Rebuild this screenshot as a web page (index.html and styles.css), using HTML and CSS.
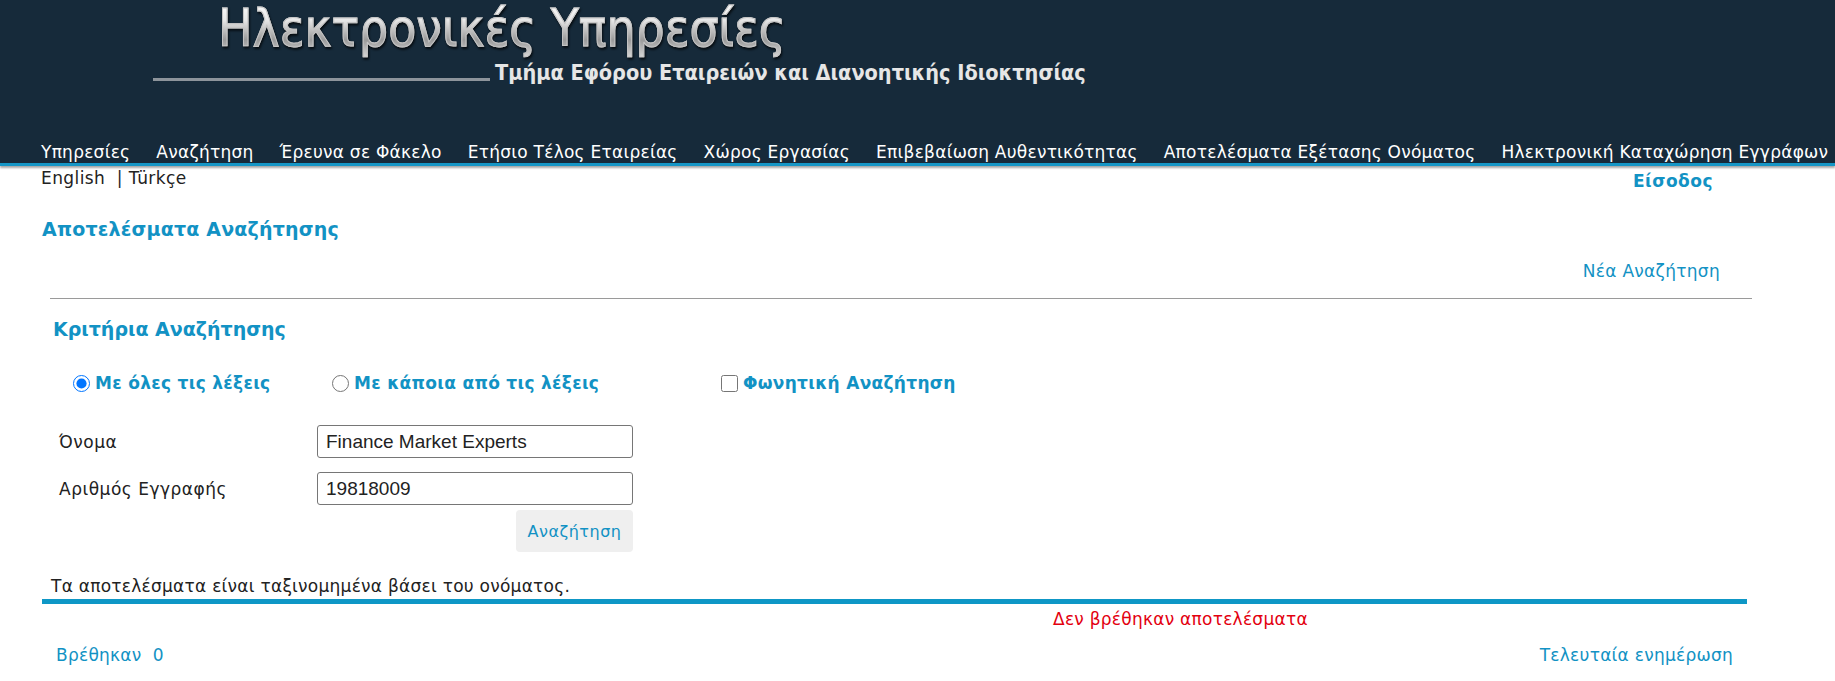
FILE: index.html
```html
<!DOCTYPE html>
<html lang="el">
<head>
    <meta charset="UTF-8">
    <meta name="viewport" content="width=device-width, initial-scale=1.0">
    <title>Αποτελέσματα Αναζήτησης</title>
    <link rel="stylesheet" href="styles.css">
</head>
<body>

    <header class="site-header">
        <div class="brand">
            <div class="brand-title">Ηλεκτρονικές Υπηρεσίες</div>
            <div class="brand-sub">
                <span class="brand-rule"></span>
                <span class="brand-dept">Τμήμα Εφόρου Εταιρειών και Διανοητικής Ιδιοκτησίας</span>
            </div>
        </div>
        <nav class="main-nav">
            <a href="#">Υπηρεσίες</a>
            <a href="#">Αναζήτηση</a>
            <a href="#">Έρευνα σε Φάκελο</a>
            <a href="#">Ετήσιο Τέλος Εταιρείας</a>
            <a href="#">Χώρος Εργασίας</a>
            <a href="#">Επιβεβαίωση Αυθεντικότητας</a>
            <a href="#">Αποτελέσματα Εξέτασης Ονόματος</a>
            <a href="#">Ηλεκτρονική Καταχώρηση Εγγράφων</a>
        </nav>
    </header>

    <div class="lang-bar">
        <div class="langs"><a href="#">English</a>&nbsp;&nbsp;| <a href="#">Türkçe</a></div>
        <a class="login" href="#">Είσοδος</a>
    </div>

    <main class="content">
        <h2 class="page-title">Αποτελέσματα Αναζήτησης</h2>
        <div class="new-search"><a href="#">Νέα Αναζήτηση</a></div>
        <hr class="divider">

        <form class="criteria" action="#" method="get">
            <h3 class="criteria-title">Κριτήρια Αναζήτησης</h3>

            <div class="options">
                <label class="opt opt-all"><input type="radio" name="mode" checked> Με όλες τις λέξεις</label>
                <label class="opt opt-some"><input type="radio" name="mode"> Με κάποια από τις λέξεις</label>
                <label class="opt"><input type="checkbox" name="phonetic"> Φωνητική Αναζήτηση</label>
            </div>

            <div class="fields">
                <label for="iname">Όνομα</label>
                <input type="text" id="iname" name="name" value="Finance Market Experts">

                <label for="inum">Αριθμός Εγγραφής</label>
                <input type="text" id="inum" name="number" value="19818009">

                <button type="submit" class="btn-search">Αναζήτηση</button>
            </div>
        </form>

        <p class="sort-note">Τα αποτελέσματα είναι ταξινομημένα βάσει του ονόματος.</p>
        <div class="results-bar"></div>
        <p class="no-results">Δεν βρέθηκαν αποτελέσματα</p>

        <div class="results-footer">
            <span>Βρέθηκαν&nbsp;&nbsp;0</span>
            <span>Τελευταία ενημέρωση</span>
        </div>
    </main>

</body>
</html>
```

FILE: styles.css
```css
/* Estilo geral */
body {
    margin: 0;
    font-family: "DejaVu Sans", Verdana, sans-serif;
    font-size: 17px;
    letter-spacing: 0.25px;
    color: #222;
    background: #fff;
}

a {
    text-decoration: none;
}

/* Cabeçalho escuro */
.site-header {
    background: #162a3a;
    box-shadow: 0 2px 2px rgba(0, 0, 0, 0.35);
}

.brand {
    height: 142px;
    letter-spacing: 0;
}

.brand-title {
    display: inline-block;
    margin-left: 218px;
    padding-top: 1px;
    font-family: "DejaVu Sans Condensed", "DejaVu Sans", sans-serif;
    font-size: 51px;
    line-height: 56px;
    background: linear-gradient(#ffffff 0%, #e8e8e8 35%, #9a9a9a 70%, #d6d6d6 100%);
    -webkit-background-clip: text;
    background-clip: text;
    color: transparent;
    -webkit-text-stroke: 1px #c4c4c4;
    filter: drop-shadow(1px 2px 1px rgba(0, 0, 0, 0.7));
}

.brand-sub {
    display: flex;
    align-items: flex-end;
    margin-top: 3px;
}

.brand-rule {
    width: 337px;
    height: 3px;
    margin: 0 5px 5px 153px;
    background: #8d949b;
}

.brand-dept {
    font-family: "DejaVu Sans Condensed", "DejaVu Sans", sans-serif;
    font-weight: bold;
    font-size: 21.5px;
    line-height: 26px;
    color: #e6e6e6;
}

/* Menu */
.main-nav {
    display: flex;
    gap: 26px;
    padding: 0 0 1px 41px;
    line-height: 20px;
    letter-spacing: 0.25px;
    border-bottom: 3px solid #1596c6;
    white-space: nowrap;
}

.main-nav a {
    color: #fff;
}

/* Idiomas e entrada */
.lang-bar {
    display: flex;
    justify-content: space-between;
    height: 28px;
    padding: 2px 122px 0 41px;
    box-sizing: border-box;
    line-height: 20px;
    letter-spacing: 0.4px;
}

.langs a {
    color: #222;
}

.login {
    margin-top: 2px;
    font-weight: bold;
    line-height: 22px;
    letter-spacing: 0.5px;
    color: #1292c4;
}

/* Conteúdo */
.content {
    padding-left: 42px;
}

.page-title {
    margin: 24px 0 0;
    font-size: 19px;
    line-height: 22px;
    letter-spacing: 0.2px;
    color: #1292c4;
}

.new-search {
    margin: 21px 115px 0 0;
    text-align: right;
    line-height: 20px;
    letter-spacing: 0.3px;
}

.new-search a,
.results-footer span {
    color: #1292c4;
}

.divider {
    height: 0;
    margin: 17px 83px 0 8px;
    border: 0;
    border-top: 1px solid #9a9a9a;
}

.criteria-title {
    margin: 19px 0 0 11px;
    font-size: 19px;
    line-height: 22px;
    letter-spacing: 0;
    color: #1292c4;
}

.options {
    display: flex;
    margin: 33px 0 0 31px;
    line-height: 20px;
    letter-spacing: 0.3px;
}

.opt {
    display: flex;
    align-items: center;
    font-weight: bold;
    color: #1292c4;
}

.opt-all {
    width: 259px;
}

.opt-some {
    width: 389px;
}

.opt input {
    width: 17px;
    height: 17px;
    margin: 0 5px 0 0;
}

.fields {
    display: grid;
    grid-template-columns: 258px 316px;
    row-gap: 14px;
    align-items: center;
    margin: 32px 0 0 17px;
    letter-spacing: 0.5px;
}

.fields input {
    height: 33px;
    padding: 0 8px;
    box-sizing: border-box;
    border: 1px solid #767676;
    border-radius: 3px;
    font-family: "Liberation Sans", Arial, sans-serif;
    font-size: 19px;
    color: #222;
}

.btn-search {
    grid-column: 2;
    justify-self: end;
    width: 117px;
    height: 42px;
    margin-top: -9px;
    border: none;
    border-radius: 4px;
    background: #efefef;
    font-family: "DejaVu Sans", Verdana, sans-serif;
    font-size: 16px;
    letter-spacing: 0.5px;
    color: #1292c4;
}

.sort-note {
    margin: 24px 0 0 9px;
    line-height: 20px;
}

.results-bar {
    height: 5px;
    margin: 3px 88px 0 0;
    background: #0e97c6;
}

.no-results {
    margin: 5px 0 0 1011px;
    line-height: 20px;
    color: #e3000f;
}

.results-footer {
    display: flex;
    justify-content: space-between;
    margin: 16px 102px 0 14px;
    line-height: 20px;
}
```
